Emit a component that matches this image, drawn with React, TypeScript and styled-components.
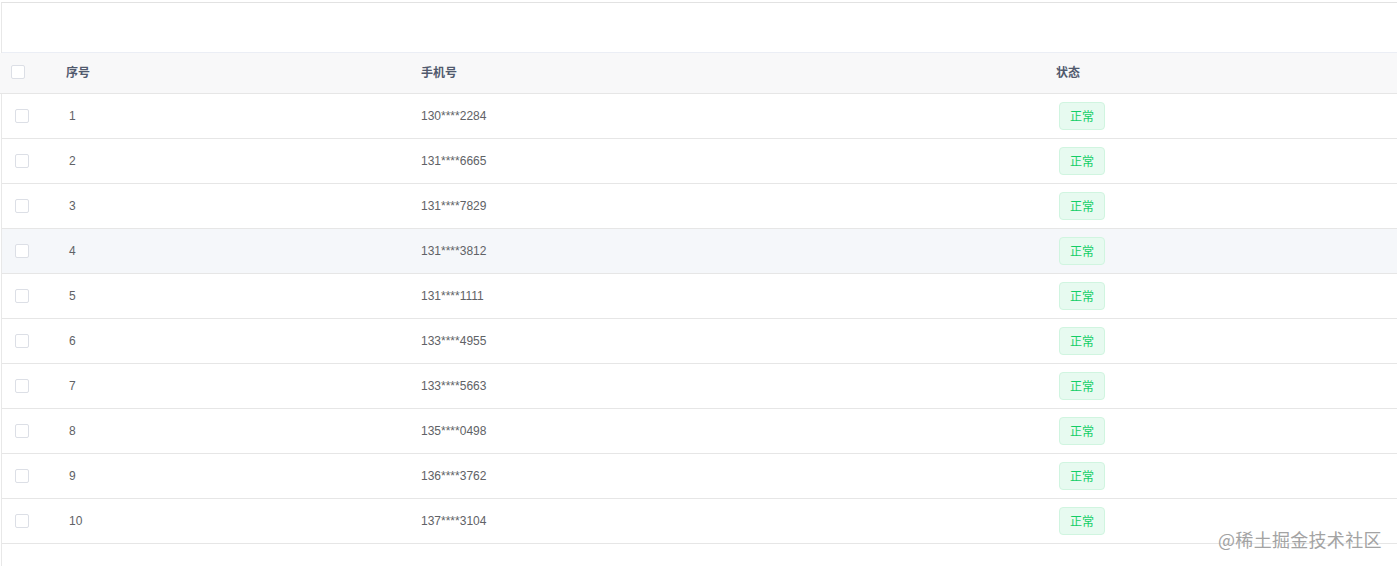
import React from "react";
import styled, { createGlobalStyle } from "styled-components";

const Global = createGlobalStyle`
  html, body { margin: 0; padding: 0; background: #fff; }
  body { font-family: "Liberation Sans", "Noto Sans CJK SC", Arial, sans-serif; font-size: 12px; color: #606266; }
  * { box-sizing: border-box; }
`;

const Page = styled.div`
  position: relative;
  height: 566px;
  padding-top: 2px;
  overflow: hidden;
`;

const Frame = styled.div`
  margin-left: 1px;
  border-left: 1px solid #e8e8e8;
  border-top: 1px solid #e2e2e2;
  height: 100%;
`;

const Toolbar = styled.div`
  height: 50px;
  border-bottom: 1px solid #ebeef5;
`;

const Row = styled.div<{ $head?: boolean; $hover?: boolean }>`
  display: grid;
  grid-template-columns: 54px 355px 635px 1fr;
  align-items: center;
  height: ${(p) => (p.$head ? "41px" : "45px")};
  border-bottom: 1px solid #e6e6e6;
  background: ${(p) => (p.$head ? "#f8f8f9" : p.$hover ? "#f5f7fa" : "#fff")};
  margin-left: ${(p) => (p.$head ? "-2px" : "0")};
  padding-left: ${(p) => (p.$head ? "2px" : "0")};
  padding-bottom: ${(p) => (p.$head ? "3px" : "0")};
`;

const Check = styled.span<{ $head?: boolean }>`
  display: block;
  width: 14px;
  height: 14px;
  border: 1px solid #dcdfe6;
  border-radius: 2px;
  background: #fff;
  margin-left: ${(p) => (p.$head ? "9px" : "13px")};
`;

const HeadCell = styled.div`
  padding-left: 10px;
  font-family: "Noto Sans CJK SC", sans-serif;
  font-weight: 700;
  color: #515a6e;
  font-size: 12px;
`;

const Cell = styled.div<{ $pad?: number }>`
  padding-left: ${(p) => p.$pad ?? 10}px;
  color: #606266;
  font-size: 12px;
`;

const Tag = styled.span`
  display: inline-flex;
  align-items: center;
  justify-content: center;
  width: 46px;
  height: 28px;
  padding-bottom: 2px;
  border: 1px solid #d0f5e0;
  background: #e7faf0;
  border-radius: 4px;
  color: #13ce66;
  font-family: "Noto Sans CJK SC", sans-serif;
  font-size: 12px;
  margin-left: 3px;
`;

const Watermark = styled.div`
  position: absolute;
  left: 1218px;
  top: 526px;
  font-family: "Noto Sans CJK SC", sans-serif;
  font-size: 18px;
  color: #a3a3a3;
  letter-spacing: 0.3px;
`;

const phones = [
  "130****2284",
  "131****6665",
  "131****7829",
  "131****3812",
  "131****1111",
  "133****4955",
  "133****5663",
  "135****0498",
  "136****3762",
  "137****3104",
];

export default function App() {
  return (
    <>
      <Global />
      <Page>
        <Frame>
          <Toolbar />
          <Row $head>
            <div><Check $head /></div>
            <HeadCell>序号</HeadCell>
            <HeadCell>手机号</HeadCell>
            <HeadCell>状态</HeadCell>
          </Row>
          {phones.map((p, i) => (
            <Row key={p} $hover={i === 3}>
              <div><Check /></div>
              <Cell $pad={13}>{i + 1}</Cell>
              <Cell>{p}</Cell>
              <Cell><Tag>正常</Tag></Cell>
            </Row>
          ))}
        </Frame>
        <Watermark>@稀土掘金技术社区</Watermark>
      </Page>
    </>
  );
}
